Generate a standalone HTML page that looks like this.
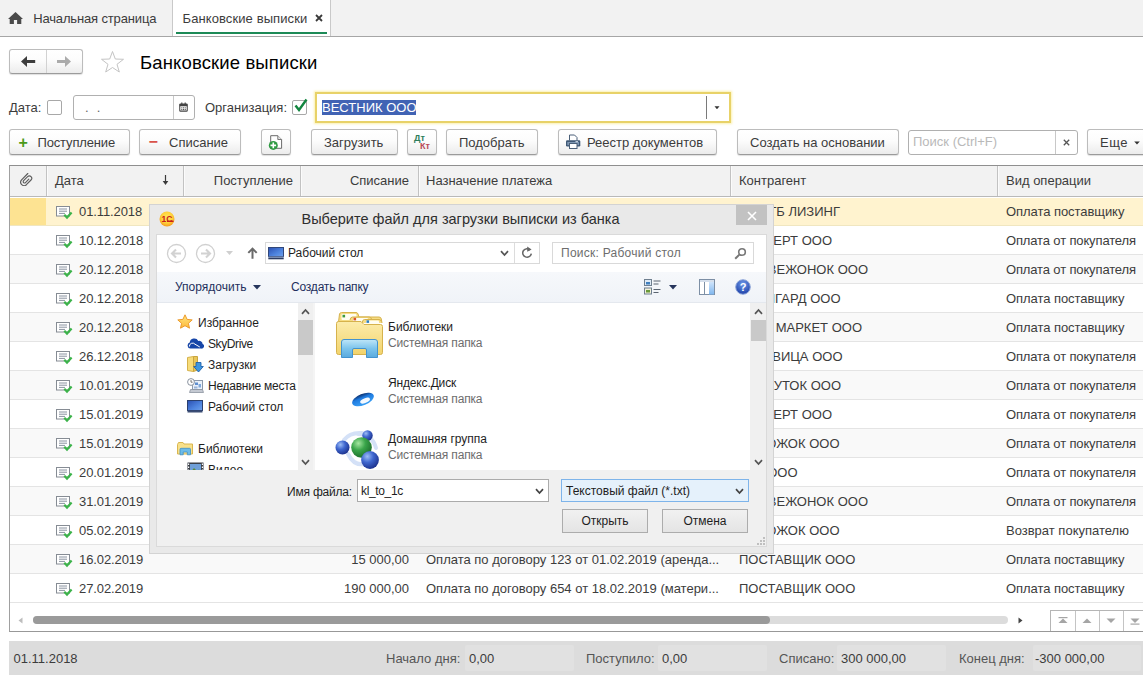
<!DOCTYPE html>
<html lang="ru">
<head>
<meta charset="utf-8">
<title>Банковские выписки</title>
<style>
*{box-sizing:border-box;margin:0;padding:0}
html,body{width:1143px;height:677px;overflow:hidden;background:#fff}
body{position:relative;font-family:"Liberation Sans",sans-serif;font-size:13px;color:#3c3c3c}
.abs{position:absolute}
.t{position:absolute;white-space:nowrap;line-height:16px}
/* tab bar */
#tabs{left:0;top:0;width:1143px;height:37px;background:#f2f2f2;border-bottom:1px solid #a6a6a6}
#tabA{left:172px;top:0;width:159px;height:36px;background:#fff;border-left:1px solid #c9c9c9;border-right:1px solid #c9c9c9}
#tabU{left:176px;top:32px;width:151px;height:2px;background:#1d8a57}
/* buttons */
.btn{position:absolute;height:26px;top:129px;border:1px solid #bcbcbc;border-bottom-color:#9b9b9b;border-radius:3px;background:linear-gradient(#ffffff 0%,#fcfcfc 45%,#ececec 100%);box-shadow:0 1px 1px rgba(0,0,0,.13)}
.btn .t{top:5px;margin-left:-1px}
.inp{position:absolute;border:1px solid #b0b0b0;border-radius:3px;background:#fff}
/* table */
#tbl{left:9px;top:165px;width:1140px;height:467px;border:1px solid #a0a0a0;border-top-color:#8f8f8f;border-bottom-color:#989898;background:#fff;overflow:hidden}
#thead{left:0;top:0;width:1140px;height:31px;background:#f2f2f2;border-bottom:1px solid #b9b9b9}
.vd{position:absolute;top:0;width:1px;height:30px;background:#c2c2c2;box-shadow:1px 0 0 #fbfbfb}
.row{position:absolute;left:0;width:1140px;height:29px;border-bottom:1px solid #e4e4e4}
.row.alt{background:#f9f9f9}
.row.sel{background:linear-gradient(#fff 0,#fff 1px,#fff3cf 1px);border-bottom-color:#f0e6c0}
.row .t{top:7px}
.r{text-align:right}
/* footer */
#foot{left:9px;top:641px;width:1140px;height:34px;background:#dcdcdc}
#foot .t{top:10px}
.fld{position:absolute;top:4px;height:26px;background:#e1e1e1;border-radius:2px}
</style>
</head>
<body>
<!-- TABS -->
<div id="tabs" class="abs"></div>
<div id="tabA" class="abs"></div>
<div id="tabU" class="abs"></div>
<svg class="abs" style="left:8px;top:11.8px" width="15" height="12" viewBox="0 0 15 12"><path d="M7.5 0 L0 7 H1.7 V12 H5.9 V8 H9.1 V12 H13.3 V7 H15 Z" fill="#4a4a4a"/></svg>
<div class="t" style="left:33.2px;top:11px;letter-spacing:-0.15px">Начальная страница</div>
<div class="t" style="left:182.5px;top:11px;letter-spacing:0.1px">Банковские выписки</div>
<svg class="abs" style="left:315px;top:14px" width="8" height="8" viewBox="0 0 8 8"><path d="M1 1 L7 7 M7 1 L1 7" stroke="#3a3a3a" stroke-width="1.8"/></svg>

<!-- HEADER -->
<div class="btn" style="left:9px;top:49px;width:74px;height:25px"></div>
<div class="abs" style="left:46px;top:50px;width:1px;height:23px;background:#d2d2d2"></div>
<svg class="abs" style="left:20px;top:55px" width="16" height="13" viewBox="0 0 16 13"><path d="M1 6.5 L7 1 V5.1 H15.2 V7.9 H7 V12 Z" fill="#3d3d3d"/></svg>
<svg class="abs" style="left:56px;top:55px" width="16" height="13" viewBox="0 0 16 13"><path d="M15 6.5 L9 1 V5.1 H1 V7.9 H9 V12 Z" fill="#ababab"/></svg>
<svg class="abs" style="left:100px;top:50.3px" width="25" height="23" viewBox="0 0 25 23"><path d="M12.5 1.5 L15.3 9 L23.5 9.3 L17 14.3 L19.3 22 L12.5 17.5 L5.7 22 L8 14.3 L1.5 9.3 L9.7 9 Z" fill="#fff" stroke="#c4c4c4" stroke-width="1"/></svg>
<div class="t" style="left:140px;top:51px;font-size:18.5px;line-height:24px;letter-spacing:0.13px;color:#000">Банковские выписки</div>

<!-- FILTER ROW -->
<div class="t" style="left:9px;top:100px">Дата:</div>
<div class="inp" style="left:47px;top:100px;width:15px;height:15px;border-radius:2px;border-color:#a8a8a8"></div>
<div class="inp" style="left:73px;top:95px;width:122px;height:25px"></div>
<div class="abs" style="left:173px;top:96px;width:1px;height:23px;background:#c8c8c8"></div>
<div class="t" style="left:85px;top:100px;letter-spacing:8.2px;color:#666">..</div>
<svg class="abs" style="left:179px;top:101.5px" width="9" height="10" viewBox="0 0 12 13"><rect x="1" y="2.5" width="10" height="9.5" rx="1" fill="none" stroke="#444" stroke-width="1.4"/><rect x="1" y="2.5" width="10" height="3" fill="#444"/><rect x="3" y="0.5" width="1.5" height="3" fill="#444"/><rect x="7.5" y="0.5" width="1.5" height="3" fill="#444"/><g fill="#444"><rect x="3" y="7" width="1.5" height="1.3"/><rect x="5.3" y="7" width="1.5" height="1.3"/><rect x="7.6" y="7" width="1.5" height="1.3"/><rect x="3" y="9.3" width="1.5" height="1.3"/><rect x="5.3" y="9.3" width="1.5" height="1.3"/><rect x="7.6" y="9.3" width="1.5" height="1.3"/></g></svg>
<div class="t" style="left:205px;top:100px">Организация:</div>
<div class="inp" style="left:292px;top:100px;width:15px;height:15px;border-radius:2px;border-color:#a8a8a8"></div>
<svg class="abs" style="left:293px;top:97px" width="16" height="16" viewBox="0 0 16 16"><path d="M2.5 8.5 L6 13 L13.5 2.5" stroke="#12853f" stroke-width="2.4" fill="none"/></svg>
<div class="abs" style="left:315px;top:92px;width:416px;height:31px;border:2px solid #e8d268;background:#fff;box-shadow:0 0 2px 1px rgba(250,236,150,.75)"></div>
<div class="abs" style="left:322px;top:100px;width:94px;height:15px;background:#4163b4"></div>
<div class="t" style="left:322px;top:99.5px;color:#fff">ВЕСТНИК ООО</div>
<div class="abs" style="left:706px;top:96px;width:1px;height:23px;background:#7a7a7a"></div>
<svg class="abs" style="left:713.5px;top:105.8px" width="6" height="3.6" viewBox="0 0 8 5"><path d="M0.5 0.5 H7.5 L4 4.5 Z" fill="#333"/></svg>

<!-- BUTTON ROW -->
<div class="btn" style="left:9px;width:121px"><span class="t" style="left:9.5px;color:#4a9a1a;font-weight:bold;font-size:16px;top:4.5px">+</span><span class="t" style="left:28.5px;letter-spacing:-0.15px">Поступление</span></div>
<div class="btn" style="left:139px;width:102px"><span class="t" style="left:9.5px;color:#d9534a;font-weight:bold;font-size:16px;top:3.5px">−</span><span class="t" style="left:30px">Списание</span></div>
<div class="btn" style="left:261px;width:30px"></div>
<svg class="abs" style="left:268px;top:135px" width="15" height="16" viewBox="0 0 15 16"><path d="M2.7 0.7 H9.8 L13.6 4.5 V13.3 H2.7 Z" fill="#fff" stroke="#6b6b6b" stroke-width="1"/><path d="M9.8 0.7 V4.5 H13.6" fill="#e8e8e8" stroke="#6b6b6b" stroke-width="0.9"/><circle cx="5.3" cy="10.4" r="4.5" fill="#2f9a42"/><path d="M5.3 7.6 V13.2 M2.5 10.4 H8.1" stroke="#fff" stroke-width="1.6"/></svg>
<div class="btn" style="left:311px;width:87px"><span class="t" style="left:13px">Загрузить</span></div>
<div class="btn" style="left:407px;width:30px"><span class="t" style="left:7px;top:3px;font-size:9px;font-weight:bold;color:#2e7d5b;line-height:11px">Дт</span><span class="t" style="left:13px;top:11px;font-size:9px;font-weight:bold;color:#b84a58;line-height:11px">Кт</span></div>
<div class="btn" style="left:446px;width:92px"><span class="t" style="left:13px">Подобрать</span></div>
<div class="btn" style="left:558px;width:159px"><span class="t" style="left:29px">Реестр документов</span></div>
<svg class="abs" style="left:565px;top:134px" width="16" height="15" viewBox="0 0 16 15"><path d="M4.5 6.5 V1 H9.5 L12 3.5 V6.5" fill="#fff" stroke="#4a5f78" stroke-width="1"/><rect x="1" y="6.3" width="14.3" height="6.2" rx="1.2" fill="#3f5875"/><rect x="2.3" y="8" width="11.7" height="3.2" fill="#7f97b3"/><rect x="10.5" y="7.2" width="2.5" height="1" fill="#dfe8f2"/><rect x="4.5" y="9.5" width="7.5" height="5" fill="#fff" stroke="#4a5f78" stroke-width="1"/></svg>
<div class="btn" style="left:737px;width:162px"><span class="t" style="left:13px">Создать на основании</span></div>
<div class="inp" style="left:908px;top:130px;width:170px;height:25px"></div>
<div class="abs" style="left:1055px;top:131px;width:1px;height:23px;background:#c8c8c8"></div>
<div class="t" style="left:913px;top:134px;color:#b9b9b9">Поиск (Ctrl+F)</div>
<svg class="abs" style="left:1063px;top:139px" width="7" height="7" viewBox="0 0 7 7"><path d="M0.8 0.8 L6.2 6.2 M6.2 0.8 L0.8 6.2" stroke="#555" stroke-width="1.3"/></svg>
<div class="btn" style="left:1087px;width:70px"><span class="t" style="left:13px;letter-spacing:0.5px">Еще</span></div>
<svg class="abs" style="left:1134px;top:140.5px" width="6" height="4" viewBox="0 0 7 5"><path d="M0 0.5 H7 L3.5 4.5 Z" fill="#333"/></svg>

<!-- TABLE -->
<div id="tbl" class="abs">
<div id="thead" class="abs"></div>
<!--ROWS-->
<div class="vd" style="left:36px"></div>
<div class="vd" style="left:173px"></div>
<div class="vd" style="left:290px"></div>
<div class="vd" style="left:408px"></div>
<div class="vd" style="left:720px"></div>
<div class="vd" style="left:987px"></div>
<svg class="abs" style="left:10px;top:6.9px" width="12.5" height="13" viewBox="0 0 12.5 13"><path d="M7.8 0.5 L1.6 6.9 A3.4 3.4 0 0 0 6.4 11.7 L11 7 A2.4 2.4 0 0 0 7.6 3.6 L3.6 7.7 A1.34 1.34 0 0 0 5.5 9.6 L8.8 6.2" fill="none" stroke="#5c5c5c" stroke-width="1.15" stroke-linecap="round"/></svg>
<div class="t" style="left:45px;top:6.5px">Дата</div>
<svg class="abs" style="left:152px;top:9px" width="7" height="10" viewBox="0 0 7 10"><path d="M3.5 0 V7" fill="none" stroke="#3a3a3a" stroke-width="1.2"/><path d="M0.7 6 H6.3 L3.5 9.9 Z" fill="#3a3a3a"/></svg>
<div class="t r" style="right:855px;top:6.5px">Поступление</div>
<div class="t r" style="right:739px;top:6.5px">Списание</div>
<div class="t" style="left:416px;top:6.5px">Назначение платежа</div>
<div class="t" style="left:729px;top:6.5px">Контрагент</div>
<div class="t" style="left:996px;top:6.5px">Вид операции</div>
<div class="row sel" style="top:31px"><div class="abs" style="left:0;top:1px;width:36px;height:27px;background:#fde392"></div><svg class="abs" style="left:46px;top:9px" width="17" height="14" viewBox="0 0 17 14"><rect x="0.5" y="0.5" width="13" height="9.5" fill="#fff" stroke="#868c94" stroke-width="1"/><path d="M3 3 H11 M3 5.2 H11 M3 7.4 H9" stroke="#8a93a0" stroke-width="1"/><path d="M8.3 8.8 L11 11.6 L15.6 6.6" fill="none" stroke="#3cb34a" stroke-width="2.2"/></svg><span class="t" style="left:69px;letter-spacing:-0.1px">01.11.2018</span><span class="t r" style="right:741px">300 000,00</span><span class="t" style="left:416px">Лизинговый платеж по договору</span><span class="t r" style="right:310px">АО ВТБ ЛИЗИНГ</span><span class="t" style="left:996px;letter-spacing:-0.06px">Оплата поставщику</span></div>
<div class="row" style="top:60px"><svg class="abs" style="left:46px;top:9px" width="17" height="14" viewBox="0 0 17 14"><rect x="0.5" y="0.5" width="13" height="9.5" fill="#fff" stroke="#868c94" stroke-width="1"/><path d="M3 3 H11 M3 5.2 H11 M3 7.4 H9" stroke="#8a93a0" stroke-width="1"/><path d="M8.3 8.8 L11 11.6 L15.6 6.6" fill="none" stroke="#3cb34a" stroke-width="2.2"/></svg><span class="t" style="left:69px;letter-spacing:-0.1px">10.12.2018</span><span class="t r" style="right:857.5px">120 000,00</span><span class="t" style="left:416px">Оплата по счету</span><span class="t r" style="right:318px">ЭКСПЕРТ ООО</span><span class="t" style="left:996px;letter-spacing:-0.14px">Оплата от покупателя</span></div>
<div class="row alt" style="top:89px"><svg class="abs" style="left:46px;top:9px" width="17" height="14" viewBox="0 0 17 14"><rect x="0.5" y="0.5" width="13" height="9.5" fill="#fff" stroke="#868c94" stroke-width="1"/><path d="M3 3 H11 M3 5.2 H11 M3 7.4 H9" stroke="#8a93a0" stroke-width="1"/><path d="M8.3 8.8 L11 11.6 L15.6 6.6" fill="none" stroke="#3cb34a" stroke-width="2.2"/></svg><span class="t" style="left:69px;letter-spacing:-0.1px">20.12.2018</span><span class="t r" style="right:857.5px">85 000,00</span><span class="t" style="left:416px">Оплата по счету</span><span class="t r" style="right:282px">МЕДВЕЖОНОК ООО</span><span class="t" style="left:996px;letter-spacing:-0.14px">Оплата от покупателя</span></div>
<div class="row" style="top:118px"><svg class="abs" style="left:46px;top:9px" width="17" height="14" viewBox="0 0 17 14"><rect x="0.5" y="0.5" width="13" height="9.5" fill="#fff" stroke="#868c94" stroke-width="1"/><path d="M3 3 H11 M3 5.2 H11 M3 7.4 H9" stroke="#8a93a0" stroke-width="1"/><path d="M8.3 8.8 L11 11.6 L15.6 6.6" fill="none" stroke="#3cb34a" stroke-width="2.2"/></svg><span class="t" style="left:69px;letter-spacing:-0.1px">20.12.2018</span><span class="t r" style="right:741px">40 000,00</span><span class="t" style="left:416px">Оплата по договору</span><span class="t r" style="right:309.5px">АВАНГАРД ООО</span><span class="t" style="left:996px;letter-spacing:-0.06px">Оплата поставщику</span></div>
<div class="row alt" style="top:147px"><svg class="abs" style="left:46px;top:9px" width="17" height="14" viewBox="0 0 17 14"><rect x="0.5" y="0.5" width="13" height="9.5" fill="#fff" stroke="#868c94" stroke-width="1"/><path d="M3 3 H11 M3 5.2 H11 M3 7.4 H9" stroke="#8a93a0" stroke-width="1"/><path d="M8.3 8.8 L11 11.6 L15.6 6.6" fill="none" stroke="#3cb34a" stroke-width="2.2"/></svg><span class="t" style="left:69px;letter-spacing:-0.1px">20.12.2018</span><span class="t r" style="right:741px">25 000,00</span><span class="t" style="left:416px">Оплата по договору</span><span class="t r" style="right:288px">ЭКО МАРКЕТ ООО</span><span class="t" style="left:996px;letter-spacing:-0.06px">Оплата поставщику</span></div>
<div class="row" style="top:176px"><svg class="abs" style="left:46px;top:9px" width="17" height="14" viewBox="0 0 17 14"><rect x="0.5" y="0.5" width="13" height="9.5" fill="#fff" stroke="#868c94" stroke-width="1"/><path d="M3 3 H11 M3 5.2 H11 M3 7.4 H9" stroke="#8a93a0" stroke-width="1"/><path d="M8.3 8.8 L11 11.6 L15.6 6.6" fill="none" stroke="#3cb34a" stroke-width="2.2"/></svg><span class="t" style="left:69px;letter-spacing:-0.1px">26.12.2018</span><span class="t r" style="right:857.5px">60 000,00</span><span class="t" style="left:416px">Оплата по счету</span><span class="t r" style="right:307.5px">ПЛОТВИЦА ООО</span><span class="t" style="left:996px;letter-spacing:-0.14px">Оплата от покупателя</span></div>
<div class="row alt" style="top:205px"><svg class="abs" style="left:46px;top:9px" width="17" height="14" viewBox="0 0 17 14"><rect x="0.5" y="0.5" width="13" height="9.5" fill="#fff" stroke="#868c94" stroke-width="1"/><path d="M3 3 H11 M3 5.2 H11 M3 7.4 H9" stroke="#8a93a0" stroke-width="1"/><path d="M8.3 8.8 L11 11.6 L15.6 6.6" fill="none" stroke="#3cb34a" stroke-width="2.2"/></svg><span class="t" style="left:69px;letter-spacing:-0.1px">10.01.2019</span><span class="t r" style="right:857.5px">30 000,00</span><span class="t" style="left:416px">Оплата по счету</span><span class="t r" style="right:309px">ЗАКУТОК ООО</span><span class="t" style="left:996px;letter-spacing:-0.14px">Оплата от покупателя</span></div>
<div class="row" style="top:234px"><svg class="abs" style="left:46px;top:9px" width="17" height="14" viewBox="0 0 17 14"><rect x="0.5" y="0.5" width="13" height="9.5" fill="#fff" stroke="#868c94" stroke-width="1"/><path d="M3 3 H11 M3 5.2 H11 M3 7.4 H9" stroke="#8a93a0" stroke-width="1"/><path d="M8.3 8.8 L11 11.6 L15.6 6.6" fill="none" stroke="#3cb34a" stroke-width="2.2"/></svg><span class="t" style="left:69px;letter-spacing:-0.1px">15.01.2019</span><span class="t r" style="right:857.5px">45 000,00</span><span class="t" style="left:416px">Оплата по счету</span><span class="t r" style="right:318px">ЭКСПЕРТ ООО</span><span class="t" style="left:996px;letter-spacing:-0.14px">Оплата от покупателя</span></div>
<div class="row alt" style="top:263px"><svg class="abs" style="left:46px;top:9px" width="17" height="14" viewBox="0 0 17 14"><rect x="0.5" y="0.5" width="13" height="9.5" fill="#fff" stroke="#868c94" stroke-width="1"/><path d="M3 3 H11 M3 5.2 H11 M3 7.4 H9" stroke="#8a93a0" stroke-width="1"/><path d="M8.3 8.8 L11 11.6 L15.6 6.6" fill="none" stroke="#3cb34a" stroke-width="2.2"/></svg><span class="t" style="left:69px;letter-spacing:-0.1px">15.01.2019</span><span class="t r" style="right:857.5px">70 000,00</span><span class="t" style="left:416px">Оплата по счету</span><span class="t r" style="right:310.5px">ПИРОЖОК ООО</span><span class="t" style="left:996px;letter-spacing:-0.14px">Оплата от покупателя</span></div>
<div class="row" style="top:292px"><svg class="abs" style="left:46px;top:9px" width="17" height="14" viewBox="0 0 17 14"><rect x="0.5" y="0.5" width="13" height="9.5" fill="#fff" stroke="#868c94" stroke-width="1"/><path d="M3 3 H11 M3 5.2 H11 M3 7.4 H9" stroke="#8a93a0" stroke-width="1"/><path d="M8.3 8.8 L11 11.6 L15.6 6.6" fill="none" stroke="#3cb34a" stroke-width="2.2"/></svg><span class="t" style="left:69px;letter-spacing:-0.1px">20.01.2019</span><span class="t r" style="right:857.5px">15 000,00</span><span class="t" style="left:416px">Оплата по счету</span><span class="t r" style="right:352.5px">ВЕК ООО</span><span class="t" style="left:996px;letter-spacing:-0.14px">Оплата от покупателя</span></div>
<div class="row alt" style="top:321px"><svg class="abs" style="left:46px;top:9px" width="17" height="14" viewBox="0 0 17 14"><rect x="0.5" y="0.5" width="13" height="9.5" fill="#fff" stroke="#868c94" stroke-width="1"/><path d="M3 3 H11 M3 5.2 H11 M3 7.4 H9" stroke="#8a93a0" stroke-width="1"/><path d="M8.3 8.8 L11 11.6 L15.6 6.6" fill="none" stroke="#3cb34a" stroke-width="2.2"/></svg><span class="t" style="left:69px;letter-spacing:-0.1px">31.01.2019</span><span class="t r" style="right:857.5px">90 000,00</span><span class="t" style="left:416px">Оплата по счету</span><span class="t r" style="right:282px">МЕДВЕЖОНОК ООО</span><span class="t" style="left:996px;letter-spacing:-0.14px">Оплата от покупателя</span></div>
<div class="row" style="top:350px"><svg class="abs" style="left:46px;top:9px" width="17" height="14" viewBox="0 0 17 14"><rect x="0.5" y="0.5" width="13" height="9.5" fill="#fff" stroke="#868c94" stroke-width="1"/><path d="M3 3 H11 M3 5.2 H11 M3 7.4 H9" stroke="#8a93a0" stroke-width="1"/><path d="M8.3 8.8 L11 11.6 L15.6 6.6" fill="none" stroke="#3cb34a" stroke-width="2.2"/></svg><span class="t" style="left:69px;letter-spacing:-0.1px">05.02.2019</span><span class="t r" style="right:741px">10 000,00</span><span class="t" style="left:416px">Возврат оплаты</span><span class="t r" style="right:310.5px">ПИРОЖОК ООО</span><span class="t" style="left:996px;letter-spacing:0px">Возврат покупателю</span></div>
<div class="row alt" style="top:379px"><svg class="abs" style="left:46px;top:9px" width="17" height="14" viewBox="0 0 17 14"><rect x="0.5" y="0.5" width="13" height="9.5" fill="#fff" stroke="#868c94" stroke-width="1"/><path d="M3 3 H11 M3 5.2 H11 M3 7.4 H9" stroke="#8a93a0" stroke-width="1"/><path d="M8.3 8.8 L11 11.6 L15.6 6.6" fill="none" stroke="#3cb34a" stroke-width="2.2"/></svg><span class="t" style="left:69px;letter-spacing:-0.1px">16.02.2019</span><span class="t r" style="right:741px">15 000,00</span><span class="t" style="left:416px">Оплата по договору 123 от 01.02.2019 (аренда...</span><span class="t" style="left:729px">ПОСТАВЩИК ООО</span><span class="t" style="left:996px;letter-spacing:-0.06px">Оплата поставщику</span></div>
<div class="row" style="top:408px"><svg class="abs" style="left:46px;top:9px" width="17" height="14" viewBox="0 0 17 14"><rect x="0.5" y="0.5" width="13" height="9.5" fill="#fff" stroke="#868c94" stroke-width="1"/><path d="M3 3 H11 M3 5.2 H11 M3 7.4 H9" stroke="#8a93a0" stroke-width="1"/><path d="M8.3 8.8 L11 11.6 L15.6 6.6" fill="none" stroke="#3cb34a" stroke-width="2.2"/></svg><span class="t" style="left:69px;letter-spacing:-0.1px">27.02.2019</span><span class="t r" style="right:741px">190 000,00</span><span class="t" style="left:416px">Оплата по договору 654 от 18.02.2019 (матери...</span><span class="t" style="left:729px">ПОСТАВЩИК ООО</span><span class="t" style="left:996px;letter-spacing:-0.06px">Оплата поставщику</span></div>
<svg class="abs" style="left:8px;top:451px" width="5" height="7" viewBox="0 0 5 7"><path d="M4.5 0.5 V6.5 L0.5 3.5 Z" fill="#bdbdbd"/></svg>
<div class="abs" style="left:23px;top:450px;width:975px;height:8px;border-radius:4px;background:#dcdcdc"></div>
<div class="abs" style="left:23px;top:450px;width:737px;height:8px;border-radius:4px;background:#9a9a9a"></div>
<svg class="abs" style="left:1008px;top:451px" width="5" height="7" viewBox="0 0 5 7"><path d="M0.5 0.5 V6.5 L4.5 3.5 Z" fill="#444"/></svg>
<div class="abs" style="left:1040px;top:444px;width:110px;height:22px;border:1px solid #b5b5b5;border-bottom:none;background:#fff"></div>
<div class="abs" style="left:1065px;top:445px;width:1px;height:21px;background:#c4c4c4"></div>
<div class="abs" style="left:1089px;top:445px;width:1px;height:21px;background:#c4c4c4"></div>
<div class="abs" style="left:1113px;top:445px;width:1px;height:21px;background:#c4c4c4"></div>
<svg class="abs" style="left:1048px;top:451px" width="10" height="8" viewBox="0 0 10 8"><path d="M0.5 6 L5 1.5 L9.5 6 Z" fill="#a5a5a5"/><rect x="0.5" y="0" width="9" height="1.2" fill="#a5a5a5"/></svg>
<svg class="abs" style="left:1072px;top:451px" width="10" height="8" viewBox="0 0 10 8"><path d="M0.5 6 L5 1.5 L9.5 6 Z" fill="#a5a5a5"/></svg>
<svg class="abs" style="left:1096px;top:451px" width="10" height="8" viewBox="0 0 10 8"><path d="M0.5 1.5 L5 6 L9.5 1.5 Z" fill="#a5a5a5"/></svg>
<svg class="abs" style="left:1120px;top:451px" width="10" height="8" viewBox="0 0 10 8"><path d="M0.5 1.5 L5 6 L9.5 1.5 Z" fill="#a5a5a5"/><rect x="0.5" y="6.5" width="9" height="1.2" fill="#a5a5a5"/></svg>
<!--/ROWS-->
</div>

<!-- FOOTER -->
<div id="foot" class="abs">
<div class="fld" style="left:456px;width:109px"></div>
<div class="fld" style="left:649px;width:109px"></div>
<div class="fld" style="left:828px;width:109px"></div>
<div class="fld" style="left:1024px;width:108px"></div>
<div class="t" style="left:4.5px">01.11.2018</div>
<div class="t" style="left:377px;color:#555">Начало дня:</div><div class="t" style="left:460px">0,00</div>
<div class="t" style="left:577px;color:#555">Поступило:</div><div class="t" style="left:653px">0,00</div>
<div class="t" style="left:770px;color:#555">Списано:</div><div class="t" style="left:832px">300 000,00</div>
<div class="t" style="left:950px;color:#555">Конец дня:</div><div class="t" style="left:1026px">-300 000,00</div>
</div>

<!--DIALOG-->
<style>
#dlg{position:absolute;left:0;top:0;width:0;height:0;font-size:12px;color:#1e1e1e}
#dlg .t{line-height:15px;margin-top:1px}
#dlg .g{color:#6d6d6d;letter-spacing:-0.15px}
.sb{position:absolute;background:#f0f0f0}
.thumb{position:absolute;background:#c9c9c9}
.wbtn{position:absolute;height:24px;border:1px solid #acacac;background:linear-gradient(#f1f1f1,#e4e4e4);text-align:center;line-height:23px}
</style>
<div id="dlg">
<div class="abs" style="left:149px;top:204px;width:625px;height:350px;background:#e9e9e9;box-shadow:inset 0 0 0 1px #d3d3d3"></div>
<!-- title bar -->
<svg class="abs" style="left:159px;top:211px" width="16" height="16" viewBox="0 0 16 16"><defs><radialGradient id="g1c" cx="50%" cy="40%" r="60%"><stop offset="0" stop-color="#ffe860"/><stop offset="0.6" stop-color="#ffd23a"/><stop offset="1" stop-color="#f59a1e"/></radialGradient></defs><circle cx="8" cy="8" r="7.5" fill="url(#g1c)"/><text x="2.6" y="11" font-family="Liberation Sans,sans-serif" font-weight="bold" font-size="8.5" fill="#c8201a">1С</text><rect x="8" y="9.6" width="6.5" height="1.4" fill="#c8201a"/></svg>
<div class="t" style="left:149px;top:209px;width:625px;text-align:center;font-size:14.5px;line-height:20px;margin-top:0;padding-right:2px;color:#2e2e2e">Выберите файл для загрузки выписки из банка</div>
<div class="abs" style="left:736px;top:205px;width:31px;height:20px;background:#c2c2c2"></div>
<svg class="abs" style="left:747px;top:210.5px" width="10" height="10" viewBox="0 0 10 10"><path d="M1 1 L9 9 M9 1 L1 9" stroke="#fff" stroke-width="1.6"/></svg>
<!-- inner -->
<div class="abs" style="left:156px;top:234px;width:611px;height:313px;background:#fff;box-shadow:inset 0 0 0 1px #dadada"></div>
<!-- nav bar -->
<svg class="abs" style="left:166px;top:242.5px" width="21" height="21" viewBox="0 0 21 21"><circle cx="10.5" cy="10.5" r="9" fill="#fff" stroke="#d0d0d0" stroke-width="1.3"/><path d="M15 10.5 H6.5 M10 6.5 L6 10.5 L10 14.5" fill="none" stroke="#d2d2d2" stroke-width="2.1"/></svg>
<svg class="abs" style="left:195px;top:242.5px" width="21" height="21" viewBox="0 0 21 21"><circle cx="10.5" cy="10.5" r="9" fill="#fff" stroke="#d0d0d0" stroke-width="1.3"/><path d="M6 10.5 H14.5 M11 6.5 L15 10.5 L11 14.5" fill="none" stroke="#d2d2d2" stroke-width="2.1"/></svg>
<svg class="abs" style="left:226px;top:251.3px" width="7" height="4" viewBox="0 0 7 4"><path d="M0 0 H7 L3.5 4 Z" fill="#cfcfcf"/></svg>
<svg class="abs" style="left:247px;top:247px" width="11" height="12" viewBox="0 0 11 12"><path d="M5.5 11.7 V1.8 M1.3 5.9 L5.5 1.6 L9.7 5.9" fill="none" stroke="#6a6a6a" stroke-width="2"/></svg>
<div class="abs" style="left:265px;top:242px;width:275px;height:22px;border:1px solid #d9d9d9;background:#fff"></div>
<div class="abs" style="left:514px;top:243px;width:1px;height:20px;background:#dcdcdc"></div>
<svg class="abs" style="left:268px;top:247.3px" width="16" height="12.5" viewBox="0 0 16 12.5"><defs><linearGradient id="gmon" x1="0" y1="0" x2="1" y2="1"><stop offset="0" stop-color="#2a4fb2"/><stop offset="0.6" stop-color="#4f85e0"/><stop offset="1" stop-color="#6fa0ea"/></linearGradient></defs><rect x="0.5" y="0.5" width="15" height="9" fill="url(#gmon)" stroke="#31477a"/><rect x="0.3" y="9.6" width="15.4" height="1.4" fill="#8fa3c6"/><rect x="0.3" y="10.8" width="15.4" height="1.5" fill="#2d3c63"/></svg>
<div class="t" style="left:288px;top:245px">Рабочий стол</div>
<svg class="abs" style="left:500px;top:250px" width="9" height="7" viewBox="0 0 9 7"><path d="M1 1.2 L4.5 5 L8 1.2" fill="none" stroke="#555" stroke-width="1.7"/></svg>
<svg class="abs" style="left:521px;top:246px" width="12" height="13" viewBox="0 0 12 13"><path d="M9.2 4 A4.3 4.3 0 1 0 10.3 7.6" fill="none" stroke="#666" stroke-width="1.5"/><path d="M6.2 0.6 L10.6 3.6 L6.2 5.8 Z" fill="#666"/></svg>
<div class="abs" style="left:552px;top:242px;width:202px;height:22px;border:1px solid #d9d9d9;background:#fff"></div>
<div class="t g" style="left:561px;top:245px;letter-spacing:0.25px">Поиск: Рабочий стол</div>
<svg class="abs" style="left:734px;top:247px" width="13" height="13" viewBox="0 0 13 13"><circle cx="8" cy="5" r="3.3" fill="none" stroke="#777" stroke-width="1.6"/><path d="M5.6 7.4 L1.2 11.8" stroke="#777" stroke-width="2"/></svg>
<!-- toolbar -->
<div class="abs" style="left:157px;top:272px;width:609px;height:31px;background:linear-gradient(#f6f8fb,#f0f3f8);border-bottom:1px solid #e4e8ee"></div>
<div class="t" style="left:175px;top:279px;color:#1e2f5c">Упорядочить</div>
<svg class="abs" style="left:253px;top:285px" width="8" height="5" viewBox="0 0 8 5"><path d="M0 0 H8 L4 4.6 Z" fill="#26355c"/></svg>
<div class="t" style="left:291px;top:279px;color:#1e2f5c;letter-spacing:-0.2px">Создать папку</div>
<svg class="abs" style="left:644px;top:279px" width="17" height="16" viewBox="0 0 17 16"><rect x="0.5" y="0.5" width="7" height="6" fill="#dfeaf5" stroke="#6f7f8f"/><rect x="2" y="3" width="4" height="2.5" fill="#3f7fbf"/><rect x="0.5" y="9" width="7" height="6" fill="#f3f1d8" stroke="#6f7f8f"/><rect x="2" y="11" width="4" height="2.5" fill="#6a9a3a"/><path d="M9.5 2 H16.5 M9.5 5 H14.5 M9.5 10.5 H16.5 M9.5 13.5 H14.5" stroke="#5a6470" stroke-width="1.2"/></svg>
<svg class="abs" style="left:669px;top:285px" width="8" height="5" viewBox="0 0 8 5"><path d="M0 0 H8 L4 4.6 Z" fill="#26355c"/></svg>
<svg class="abs" style="left:699px;top:279px" width="16" height="16" viewBox="0 0 16 16"><defs><linearGradient id="gpp" x1="0" y1="0" x2="0" y2="1"><stop offset="0" stop-color="#cfe4fb"/><stop offset="1" stop-color="#7fb6ee"/></linearGradient></defs><rect x="0.5" y="0.5" width="15" height="15" fill="#fff" stroke="#7d8fa5"/><rect x="1" y="1" width="14" height="2" fill="#d5dfec"/><rect x="10" y="3" width="5" height="12.5" fill="url(#gpp)"/><path d="M5.5 3 V15.5" stroke="#7d8fa5"/></svg>
<svg class="abs" style="left:735px;top:279px" width="16" height="16" viewBox="0 0 16 16"><defs><radialGradient id="ghl" cx="50%" cy="30%" r="70%"><stop offset="0" stop-color="#6f9bea"/><stop offset="1" stop-color="#1d3fa8"/></radialGradient></defs><circle cx="8" cy="8" r="7.3" fill="url(#ghl)" stroke="#8fa6d8" stroke-width="1"/><text x="8" y="12" text-anchor="middle" font-family="Liberation Sans,sans-serif" font-weight="bold" font-size="11" fill="#fff">?</text></svg>
<!-- left tree -->
<div class="sb" style="left:298px;top:303px;width:15px;height:167px"></div>
<div class="thumb" style="left:298px;top:320px;width:15px;height:35px"></div>
<svg class="abs" style="left:301px;top:308px" width="9" height="7" viewBox="0 0 9 7"><path d="M1 5.8 L4.5 2 L8 5.8" fill="none" stroke="#555" stroke-width="1.7"/></svg>
<svg class="abs" style="left:301px;top:459px" width="9" height="7" viewBox="0 0 9 7"><path d="M1 1.2 L4.5 5 L8 1.2" fill="none" stroke="#555" stroke-width="1.7"/></svg>
<div class="abs" style="left:313px;top:303px;width:2px;height:167px;background:#f4f4f4"></div>
<!--TREE-->
<svg class="abs" style="left:177px;top:314px" width="16" height="15" viewBox="0 0 16 15"><defs><linearGradient id="gst" x1="0" y1="0" x2="0" y2="1"><stop offset="0" stop-color="#ffe680"/><stop offset="1" stop-color="#fdb93a"/></linearGradient></defs><path d="M8 0.8 L10.1 5.4 L15.2 5.9 L11.4 9.3 L12.5 14.2 L8 11.7 L3.5 14.2 L4.6 9.3 L0.8 5.9 L5.9 5.4 Z" fill="url(#gst)" stroke="#ec9a2c" stroke-width="1" stroke-linejoin="round"/></svg>
<div class="t" style="left:198px;top:315px">Избранное</div>
<svg class="abs" style="left:186.5px;top:337.5px" width="17" height="11" viewBox="0 0 17 11"><path d="M3.4 10.6 A3.1 3.1 0 0 1 2.7 4.6 A4.6 4.6 0 0 1 11.3 2.9 A3.4 3.4 0 0 1 15.6 6 A2.4 2.4 0 0 1 14.4 10.6 Z" fill="#1746a8"/><path d="M2.4 8.6 A3.2 3.2 0 0 1 8 6.2 L12.8 9" fill="none" stroke="#fff" stroke-width="1"/></svg>
<div class="t" style="left:208px;top:336px;letter-spacing:-0.4px">SkyDrive</div>
<svg class="abs" style="left:187px;top:356px" width="17" height="17" viewBox="0 0 17 17"><path d="M0.5 1.5 L6.5 0.5 V15.5 L0.5 14.5 Z" fill="#f7dc7a" stroke="#d5b24c"/><path d="M6.5 0.5 H10.5 V14 L6.5 15.5 Z" fill="#e9c75a" stroke="#c9a540"/><path d="M9 6.5 H14 V10.5 H16.3 L11.5 16 L6.7 10.5 H9 Z" fill="#3f97e0" stroke="#1f62ac" stroke-width="0.9"/></svg>
<div class="t" style="left:208px;top:357px">Загрузки</div>
<svg class="abs" style="left:187px;top:378px" width="17" height="15" viewBox="0 0 17 15"><rect x="5.5" y="2.5" width="10" height="9" fill="#eaf1fa" stroke="#8b98aa"/><rect x="8" y="4.5" width="3" height="2.5" fill="#5f8fd0"/><rect x="11.5" y="6" width="2.5" height="3.5" fill="#7fa8dc"/><rect x="7" y="8.5" width="3.5" height="2" fill="#9ab4d8"/><path d="M3.5 11.5 H15.5 L16.5 14.5 H2.5 Z" fill="#c4c9d2" stroke="#8d949f" stroke-width="0.8"/><circle cx="4" cy="4" r="3.4" fill="#fff" stroke="#7d8794" stroke-width="0.9"/><path d="M4 2 V4.2 H5.6" fill="none" stroke="#555" stroke-width="0.8"/></svg>
<div class="t" style="left:208px;top:378px;letter-spacing:-0.27px">Недавние места</div>
<svg class="abs" style="left:187px;top:400px" width="16" height="13" viewBox="0 0 16 13"><rect x="0.5" y="0.5" width="15" height="10" fill="url(#gmon)" stroke="#2a3f6e"/><rect x="0.5" y="10.5" width="15" height="2" fill="#3b4d74"/></svg>
<div class="t" style="left:208px;top:399px">Рабочий стол</div>
<svg class="abs" style="left:177px;top:441px" width="17" height="15" viewBox="0 0 17 15"><path d="M0.5 3.5 L1.5 1.5 H6 L7 3 H15.5 V13 H0.5 Z" fill="#f8e08a" stroke="#d9b650"/><path d="M3 13.8 V8.3 Q3 7.3 4 7.3 H12.5 Q13.5 7.3 13.5 8.3 V13.8 H10.3 V11 H6.2 V13.8 Z" fill="#6cbbe8" stroke="#3d8fc6" stroke-width="0.8"/></svg>
<div class="t" style="left:198px;top:441px">Библиотеки</div>
<svg class="abs" style="left:187px;top:462px" width="17" height="13" viewBox="0 0 17 13"><rect x="0.5" y="0.5" width="16" height="12" fill="#3a3f48"/><rect x="3" y="2" width="11" height="9" fill="#6f9fd8"/><path d="M3 11 L7 6 L10 9 L12 7.5 L14 11 Z" fill="#5a8a3a"/><g fill="#fff"><rect x="1" y="1.5" width="1.2" height="1.5"/><rect x="1" y="4.5" width="1.2" height="1.5"/><rect x="1" y="7.5" width="1.2" height="1.5"/><rect x="14.8" y="1.5" width="1.2" height="1.5"/><rect x="14.8" y="4.5" width="1.2" height="1.5"/><rect x="14.8" y="7.5" width="1.2" height="1.5"/></g></svg>
<div class="t" style="left:208px;top:462px">Видео</div>
<!--/TREE-->
<!-- file list -->
<div class="sb" style="left:750px;top:303px;width:16px;height:167px"></div>
<div class="thumb" style="left:751px;top:320px;width:15px;height:21px"></div>
<svg class="abs" style="left:754px;top:308px" width="9" height="7" viewBox="0 0 9 7"><path d="M1 5.8 L4.5 2 L8 5.8" fill="none" stroke="#555" stroke-width="1.7"/></svg>
<svg class="abs" style="left:754px;top:459px" width="9" height="7" viewBox="0 0 9 7"><path d="M1 1.2 L4.5 5 L8 1.2" fill="none" stroke="#555" stroke-width="1.7"/></svg>
<!--FILES-->
<svg class="abs" style="left:335px;top:311px" width="49" height="48" viewBox="0 0 49 48"><defs><linearGradient id="gfo" x1="0" y1="0" x2="0" y2="1"><stop offset="0" stop-color="#fcecab"/><stop offset="1" stop-color="#f2d36c"/></linearGradient><linearGradient id="gtr" x1="0" y1="0" x2="0" y2="1"><stop offset="0" stop-color="#bfe6f8"/><stop offset="0.5" stop-color="#7cc4ec"/><stop offset="1" stop-color="#5aaade"/></linearGradient></defs>
<path d="M3.5 11 L4.5 3 Q5 1.5 6.5 1.5 H21 Q22.5 1.5 23 3 L24 6 H44 Q46 6 46.3 8 L47 12" fill="#f6dc83" stroke="#d6b24c"/>
<rect x="6.5" y="3" width="15" height="6" rx="1" fill="#fffdf2"/><rect x="7.5" y="3.8" width="2.6" height="2.6" fill="#3f9a3a"/>
<path d="M15 9 Q15.5 6 17.5 6 H34 Q36 6 36.5 8 L37 10" fill="#f6dc83" stroke="#d6b24c"/><rect x="18" y="7" width="15" height="4" rx="1" fill="#fffdf2"/><rect x="18.5" y="6.8" width="2.6" height="2.6" fill="#d9532a"/>
<path d="M27 12 Q27.5 8.5 29.5 8.5 H44 Q46 8.5 46.3 10.5" fill="#f6dc83" stroke="#d6b24c"/><rect x="31" y="9.5" width="13" height="3.5" rx="1" fill="#fffdf2"/><rect x="31.5" y="9.3" width="2.6" height="2.6" fill="#2f7fc0"/>
<path d="M1.5 12.5 Q1.5 10.5 3.5 10.5 H26 L29 13.5 H45.5 Q47.5 13.5 47.5 15.5 V41.5 Q47.5 43.5 45.5 43.5 H3.5 Q1.5 43.5 1.5 41.5 Z" fill="url(#gfo)" stroke="#d6b24c"/>
<path d="M6.5 46.5 V31 Q6.5 28.5 9 28.5 H40 Q42.5 28.5 42.5 31 V46.5 H31.5 V39 Q31.5 37.5 30 37.5 H19 Q17.5 37.5 17.5 39 V46.5 Z" fill="url(#gtr)" stroke="#4393cf"/>
</svg>
<div class="t" style="left:388px;top:319px">Библиотеки</div>
<div class="t g" style="left:388px;top:335px">Системная папка</div>
<svg class="abs" style="left:351px;top:391px" width="24" height="17" viewBox="0 0 24 17"><defs><linearGradient id="gyd" x1="0" y1="0" x2="0" y2="1"><stop offset="0" stop-color="#0b2f6e"/><stop offset="0.35" stop-color="#1f7be0"/><stop offset="1" stop-color="#3aa0f5"/></linearGradient></defs><g transform="rotate(-22 12 8.5)"><ellipse cx="12" cy="8.5" rx="11.5" ry="5.6" fill="url(#gyd)"/><ellipse cx="13.5" cy="10.3" rx="5.2" ry="2.3" fill="#f4f9ff"/></g></svg>
<div class="t" style="left:388px;top:375px;letter-spacing:-0.15px">Яндекс.Диск</div>
<div class="t g" style="left:388px;top:391px">Системная папка</div>
<svg class="abs" style="left:334px;top:428px" width="50" height="42" viewBox="0 0 50 42"><defs><radialGradient id="gbl" cx="35%" cy="30%" r="75%"><stop offset="0" stop-color="#9dbdf5"/><stop offset="0.45" stop-color="#3f67cf"/><stop offset="1" stop-color="#1a2f8a"/></radialGradient><radialGradient id="ggr" cx="35%" cy="30%" r="75%"><stop offset="0" stop-color="#a5e6a0"/><stop offset="0.45" stop-color="#3aa54a"/><stop offset="1" stop-color="#1b6a2a"/></radialGradient></defs>
<path d="M14 26 Q20 38 30 36 M24 6 Q38 6 42 20 M10 12 Q16 4 28 5" fill="none" stroke="#c9d9f5" stroke-width="4" stroke-linecap="round" opacity="0.8"/>
<circle cx="33.5" cy="7.5" r="5.2" fill="url(#gbl)"/>
<circle cx="8.5" cy="19.5" r="7" fill="url(#gbl)"/>
<circle cx="27.5" cy="19.5" r="10.3" fill="url(#ggr)"/>
<circle cx="36" cy="32" r="8.9" fill="url(#gbl)"/>
</svg>
<div class="t" style="left:388px;top:431px">Домашняя группа</div>
<div class="t g" style="left:388px;top:447px">Системная папка</div>
<!--/FILES-->
<!-- bottom panel -->
<div class="abs" style="left:157px;top:470px;width:609px;height:76px;background:#f0f0f0"></div>
<div class="t" style="left:287px;top:484px;letter-spacing:-0.2px">Имя файла:</div>
<div class="abs" style="left:357px;top:479px;width:192px;height:23px;border:1px solid #ababab;background:#fff"></div>
<div class="t" style="left:361px;top:483px;letter-spacing:-0.35px">kl_to_1c</div>
<svg class="abs" style="left:535px;top:488px" width="9" height="7" viewBox="0 0 9 7"><path d="M1 1.2 L4.5 5 L8 1.2" fill="none" stroke="#444" stroke-width="1.7"/></svg>
<div class="abs" style="left:561px;top:479px;width:188px;height:23px;border:1px solid #7eb4ea;background:#e5f1fb"></div>
<div class="t" style="left:566px;top:483px">Текстовый файл (*.txt)</div>
<svg class="abs" style="left:735px;top:488px" width="9" height="7" viewBox="0 0 9 7"><path d="M1 1.2 L4.5 5 L8 1.2" fill="none" stroke="#444" stroke-width="1.7"/></svg>
<div class="wbtn" style="left:562px;top:509px;width:86px">Открыть</div>
<div class="wbtn" style="left:662px;top:509px;width:86px">Отмена</div>
<svg class="abs" style="left:757px;top:537px" width="9" height="9" viewBox="0 0 9 9"><g fill="#bfbfbf"><rect x="6" y="0" width="2" height="2"/><rect x="3" y="3" width="2" height="2"/><rect x="6" y="3" width="2" height="2"/><rect x="0" y="6" width="2" height="2"/><rect x="3" y="6" width="2" height="2"/><rect x="6" y="6" width="2" height="2"/></g></svg>
</div>
<!--/DIALOG-->
</body>
</html>
